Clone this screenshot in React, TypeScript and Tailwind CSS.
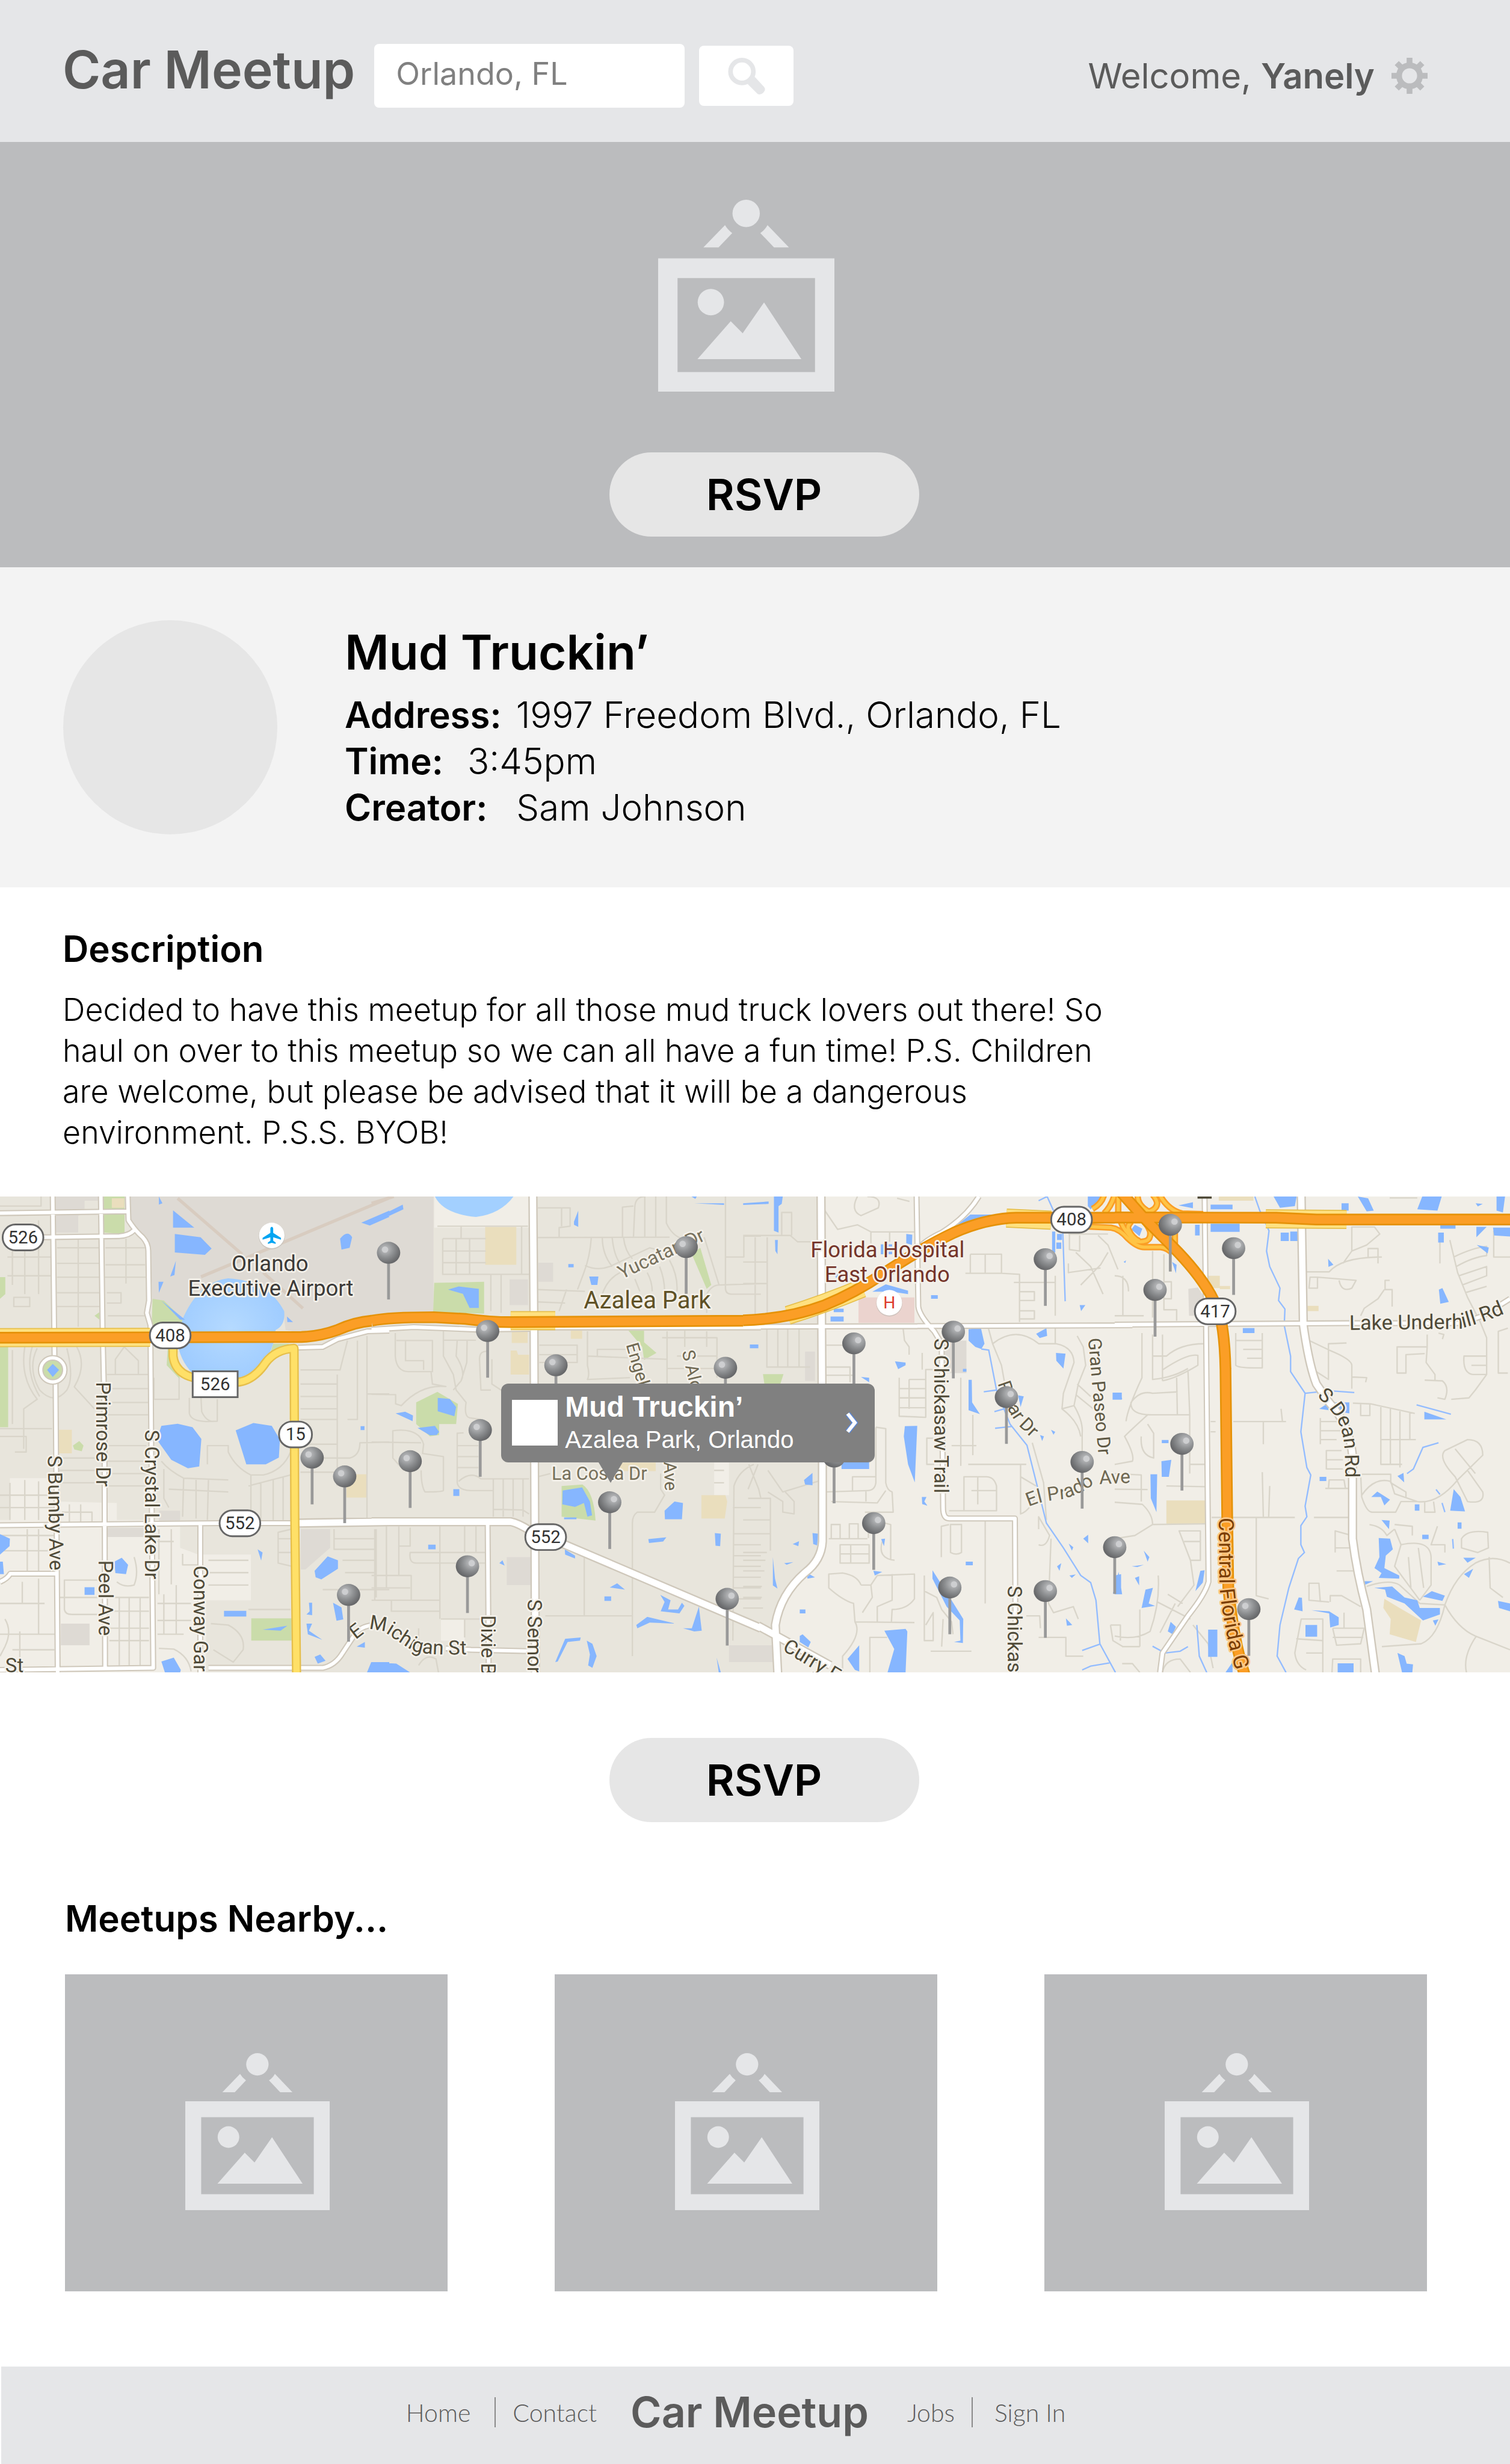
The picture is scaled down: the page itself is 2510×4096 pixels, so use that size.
import type { ReactNode } from "react";

/* ---------- map geometry ---------- */

// The map is drawn on a 4267 x 1345 canvas, sheet by sheet. Each sheet has its own grid.
const sheets = {
  a: { x: 0, y: -12, sx: 0.7015, sy: 0.8737 },
  b: { x: 1050, y: -12, sx: 0.7015, sy: 0.8737 },
  c: { x: 2100, y: -12, sx: 0.7015, sy: 0.8737 },
  d: { x: 3150, y: -12, sx: 0.7124, sy: 0.8737 },
  e: { x: 3100, y: -12, sx: 0.3333, sy: 0.3333 },
};
type Sheet = keyof typeof sheets;

const px = (s: Sheet, x: number) => Math.round(sheets[s].x + x * sheets[s].sx);
const py = (s: Sheet, y: number) => Math.round(sheets[s].y + y * sheets[s].sy);
const on = (s: Sheet, d: string) =>
  d.replace(/(-?\d+) (-?\d+)/g, (_, x, y) => `${px(s, Number(x))} ${py(s, Number(y))}`);
const shapes = (s: Sheet, list: string) =>
  list
    .split(";")
    .map((p) => on(s, "M" + p.trim() + "Z"))
    .join("");
// "x1 y1 x2 y2" corner pairs
const boxes = (s: Sheet, list: string) =>
  list
    .split(";")
    .map((b) => {
      const [x1, y1, x2, y2] = b.trim().split(" ").map(Number);
      return on(s, `M${x1} ${y1} L${x2} ${y1} L${x2} ${y2} L${x1} ${y2}Z`);
    })
    .join("");

const pale =
  shapes("a", "40 925 L230 925 L230 1000 L470 1005 L470 1060 L725 1060 L725 1150 L800 1172 L1010 1172 L1010 1320 L830 1320 L830 1553 L0 1553 L0 1060 L40 1060") +
  boxes("b", "252 14 635 115; 280 1380 375 1450; 1380 875 1440 980") +
  shapes("c", "330 0 L3200 0 L3200 1560 L140 1560 L130 1400 Q150 1300 250 1230 L320 1140");

const stone =
  shapes("a", "520 14 L1568 14 L1568 395 L1430 415 L1220 455 L1150 445 L1140 380 L1000 280 L800 320 L740 410 L615 345 L605 180 L520 90; 225 14 L395 14 L395 28 L340 28 L340 70 L315 75 L315 130 L225 130; 1212 1090 L1330 1090 L1330 1150 L1230 1220 L1212 1220") +
  boxes("a", "430 1085 600 1115; 245 1395 360 1465; 640 1030 725 1062") +
  boxes("b", "0 14 250 395; 556 282 630 365; 545 1180 640 1270; 672 228 732 290; 1440 1465 1568 1520") +
  boxes("c", "810 480 900 585; 0 1465 125 1520; 250 515 290 610") +
  shapes("d", "292 312 L330 308 L360 345 L345 400 L295 400");

const park =
  shapes("a", "417 14 L502 14 L502 135 L417 130; 0 275 L22 275 L22 330 L0 345; 615 345 L660 350 L740 412 L740 450 L610 450; 675 500 L700 500 L725 605 L672 560; 1100 490 L1165 490 L1080 540; 293 820 L320 805 L336 820 L330 838 L300 832; 380 400 L400 388 L400 412") +
  boxes("a", "0 500 33 760; 1012 1378 1175 1450") +
  shapes("b", "252 293 L453 290 L453 393 L248 388; 180 680 L265 645 L348 685 L340 750 L272 750 L272 785 L235 790 L180 750; 765 950 L850 945 Q895 970 903 1062 L765 1050; 1035 447 L1098 447 L1098 485 L1147 520 L1098 543 L1090 500; 1290 200 L1325 180 L1368 300 L1350 312") +
  shapes("c", "80 588 L162 588 L150 620 L85 620");

const sand =
  boxes("a", "237 768 290 845; 1395 912 1478 988; 450 20 500 50") +
  boxes("b", "458 112 583 235; 565 450 628 488; 803 448 848 474; 1000 875 1145 902") +
  shapes("b", "560 512 L585 512 L590 525 L635 525 L635 590 L560 590; 1328 980 L1425 980 L1433 1000 L1423 1055 L1328 1055") +
  boxes("d", "372 270 417 310; 417 303 458 314; 205 997 360 1073; 757 367 808 384; 412 14 550 28") +
  shapes("d", "1070 1315 L1130 1345 L1215 1385 L1195 1455 L1090 1430 L1095 1380 L1065 1345");

const water =
  shapes("a", "697 58 L783 115 L697 115; 704 135 L808 145 L852 182 L826 203 L704 195; 708 222 L703 268 L686 272; 638 290 L658 290 L640 325; 640 14 L655 35 L640 40; 650 350 L745 412 L725 412; 1455 98 L1568 60 L1568 80 L1490 108; 1370 150 Q1400 120 1418 145 L1408 180 L1375 185; 632 800 L650 755 L715 748 L775 760 L811 798 L802 887 L757 893 L690 865; 949 770 L1020 746 L1095 755 L1128 800 L1124 858 L1070 880 L992 880; 460 1195 L490 1182 L516 1205 L508 1235 L465 1232; 1038 1155 L1058 1165 L1052 1192; 0 1106 L40 1120 L38 1145 L0 1172; 0 1195 L12 1195 L15 1235 L0 1235; 1267 1225 L1320 1178 L1362 1190 L1362 1218 L1295 1252 L1272 1245; 1342 1328 L1375 1342 L1383 1382 L1355 1386; 1235 1395 L1258 1395 L1245 1418 L1298 1448 L1240 1430; 1245 1328 L1258 1328 L1258 1368 L1235 1365 L1248 1355; 1267 1503 L1290 1495 L1312 1515 L1280 1525; 650 1518 L700 1505 L728 1545 L725 1553 L665 1553; 1495 1520 L1568 1520 L1568 1553 L1478 1553; 1058 1415 L1158 1402 L1130 1418; 1437 1470 L1470 1455 L1470 1473; 1156 402 L1180 420 L1158 420") +
  boxes("a", "340 1277 380 1302; 903 1354 992 1372; 1453 757 1468 769") +
  shapes("b", "0 90 L125 40 L128 55 L0 103; 308 315 L350 305 L432 312 L432 374 L395 374 L368 328; 267 665 L315 668 L340 695 L333 725 L267 708; 97 715 L135 710 L167 722 L165 740; 186 762 L255 755 L272 775 L262 785 L235 786; 770 965 L848 955 L880 1000 L888 1045 L870 1050 L855 1005 L820 1018 L768 1010; 877 272 L914 272 L910 300 L885 300; 815 95 L832 60 L832 112 L815 105; 1180 1030 L1220 1000 L1254 1005 L1250 1058 L1182 1058; 1115 1122 L1188 1116 L1175 1130 L1118 1134; 1383 1102 L1407 1105 L1404 1145 L1385 1143; 1066 1400 L1110 1373 L1225 1395 L1120 1392 L1070 1410; 1255 1410 L1290 1410 L1318 1340 L1330 1418 L1300 1420; 740 1520 L780 1445 L842 1440 L840 1450 L790 1455 L750 1518; 867 1450 L890 1460 L906 1500 L890 1538 L872 1530 L880 1495; 1163 1302 L1205 1320 L1195 1350 L1235 1350 L1250 1328 L1260 1338 L1240 1362 L1165 1355 L1180 1325; 0 1520 L100 1525 L155 1553 L0 1553; 960 1278 L990 1265 L1020 1285; 515 1200 L528 1190 L536 1207; 778 1155 L820 1175 L820 1185 L780 1172; 1300 36 L1420 36 L1420 41; 1288 14 L1310 14 L1305 22; 1390 1505 L1407 1553 L1398 1553") +
  boxes("b", "793 232 814 243; 228 1140 258 1155; 329 960 354 982; 1524 492 1558 505; 938 1307 965 1322; 775 1052 825 1057") +
  shapes("c", "124 14 L160 14 L155 38 L142 45 L142 130 L124 125; 128 155 L140 155 L138 200 L130 190; 862 105 L915 72 L1020 72 L1010 85 L930 95; 657 135 L682 137 L680 170 L657 165; 520 322 L575 298 L665 318 L665 330 L600 322; 908 443 L958 440 L972 490 L960 507 L935 500 L908 480; 647 790 L652 757 L701 755 L692 938 L665 880; 908 607 L921 607 L922 680 L953 718 L908 705; 569 1418 L655 1412 L662 1420 L655 1553 L582 1553 L608 1478; 762 1222 L840 1320 L887 1380 L885 1458 L850 1455 L875 1450 L872 1385 L820 1340 L762 1250; 245 930 L280 908 L280 948 L250 945; 280 1102 L302 1105 L298 1142 L282 1138; 421 1510 L468 1465 L468 1550 L450 1545; 228 1435 L240 1430 L272 1455 L262 1472 L228 1455; 612 547 L655 550 L655 560 L625 572; 1260 520 L1298 522 L1290 570 L1262 545; 1180 458 L1222 440 L1224 465 L1195 472; 1108 657 L1130 660 L1118 695; 1490 1298 L1512 1228 L1527 1300; 120 1180 L128 1250 L138 1282 L120 1272; 255 1230 L290 1245 L260 1250; 474 598 L508 600 L508 615; 525 1225 L560 1228 L530 1240; 1370 1120 L1390 1108 L1390 1135; 1265 1210 L1282 1200 L1275 1225; 1300 1378 L1326 1400 L1305 1402; 1388 14 L1450 14 L1400 55 L1388 45; 720 985 L738 985 L730 1000 L742 1014 L722 1008; 165 1200 L203 1196 L175 1205; 200 1138 L225 1128 L222 1144; 556 1122 L572 1120 L568 1145; 1196 785 L1212 790 L1205 805; 1240 768 L1258 775 L1250 784; 1312 1136 L1330 1148 L1325 1160; 1315 1240 L1340 1236 L1325 1248; 1356 365 L1378 365 L1362 385; 0 36 L103 30 L103 38 L0 41; 1533 225 L1542 220 L1540 229") +
  boxes("c", "352 402 405 418; 365 377 405 388; 396 870 508 895; 1488 648 1525 671; 757 333 784 345; 897 1195 925 1206; 28 492 62 505; 1245 127 1257 195; 1265 135 1285 155; 1262 163 1282 183; 228 1349 251 1362; 885 571 900 580; 555 168 600 200; 372 262 408 276") +
  shapes("d", "630 14 L722 14 L715 45 L655 50; 252 42 L310 32 L310 52; 965 14 L1005 20 L1028 60 L1000 62; 1200 55 L1220 14 L1297 14 L1280 60; 1500 115 L1568 115 L1568 143 L1505 140; 1435 145 L1435 112 L1475 112; 1436 170 L1484 178 L1480 198; 1515 14 L1548 14 L1540 65 L1515 60; 1286 315 L1300 310 L1325 355 L1292 360; 846 215 L867 235 L848 242; 142 912 L168 912 L165 1035 L143 990; 185 870 L224 865 L215 920 L187 920; 812 700 L850 680 L930 680 L930 715 L880 708; 1228 710 L1315 735 L1228 735; 1018 985 L1042 968 L1092 995 L1070 1013 L1055 985; 1331 1030 L1345 960 L1372 985 L1390 1032; 1047 1118 L1092 1120 L1104 1155 L1075 1175 L1070 1215 L1128 1240 L1128 1250 L1047 1248 L1058 1232 L1030 1215 L1050 1180; 1030 1280 L1100 1275 L1150 1310 L1200 1320 L1210 1345 L1290 1345 L1290 1365 L1222 1385 L1150 1330 L1080 1308 L1072 1285; 1222 1308 L1258 1290 L1310 1305 L1300 1322; 1520 1322 L1568 1330 L1568 1355 L1525 1345; 711 1350 L730 1310 L743 1312 L745 1355; 780 1352 L850 1355 L888 1375 L888 1400 L855 1408 L850 1362; 1122 1490 L1150 1500 L1158 1525 L1183 1527 L1180 1553 L1140 1553; 106 1345 L122 1285 L152 1280 L135 1330 L160 1338; 320 1290 L340 1225 L356 1222 L350 1262; 0 1300 L0 1240 L25 1235 L25 1300; 1386 1235 L1422 1218 L1405 1248; 1382 1182 L1432 1182 L1400 1198; 1058 1060 L1090 1062 L1088 1090; 210 1420 L222 1390 L243 1405 L230 1430; 1122 918 L1145 908 L1148 938; 115 1160 L138 1180 L130 1195; 0 650 L25 648 L30 670 L0 670; 228 225 L245 235 L243 262; 66 120 L80 105 L110 118 L98 142; 80 1248 L97 1242 L97 1272; 68 1210 L115 1205 L90 1212; 440 1553 L468 1520 L468 1553; 987 1258 L1025 1258 L990 1270; 1262 1385 L1285 1382 L1272 1402; 1432 35 L1460 38 L1440 46; 1280 1195 L1315 1203 L1285 1208") +
  boxes("d", "380 40 468 55; 380 102 496 128; 318 105 337 140; 658 130 690 158; 696 127 726 158; 900 35 928 60; 1292 107 1352 118; 1283 130 1305 162; 508 440 555 455; 813 920 840 934; 757 1400 803 1438; 885 1523 948 1553; 371 1415 407 1503; 1190 1010 1208 1030; 1360 1068 1376 1088; 1220 1108 1245 1122; 187 801 214 811");

const creeks =
  on("c", "M1190 28 L1225 14 L1250 60 M1287 120 L1297 352 M960 507 L990 510 L1020 640 L1075 750 L1143 818 L1185 950 L1222 1070 L1290 1150 L1360 1240 L1400 1262 L1421 1320 L1437 1460 L1500 1553 M970 646 L1020 640 M1012 710 L1060 698 M1015 763 L1080 758 M1365 1482 L1437 1462 M1365 1545 L1400 1532 L1475 1522") +
  on("d", "M556 14 L575 60 L612 125 L602 190 L615 240 L655 310 L650 350 L675 378 L673 430 L697 530 L697 580 L755 650 L738 775 L762 890 L778 915 L755 1015 L762 1050 L738 1078 L738 1140 L752 1165 L728 1185 L690 1280 L655 1400 L645 1500 L680 1553 M755 650 L850 642 L950 648 M1160 910 L1185 895 L1222 825 L1285 810 M1197 688 L1333 718 M150 1468 L200 1490 L260 1485 L290 1470 M325 1400 L335 1500 L365 1553 M1275 962 L1290 978 M1298 1005 L1310 1035 M1340 1122 L1343 1152");

const streets =
  on("a", "M0 45 L165 45 L165 14 M50 155 L50 300 M100 160 L100 330 M155 90 L155 330 M30 210 L205 210 M30 270 L205 270 M55 340 L120 340 L120 370 L55 370 Z M230 180 L400 180 M230 230 L400 230 M230 275 L590 275 M230 325 L400 325 M230 370 L400 370 M315 150 L315 435 M425 180 L585 180 M425 235 L585 235 M508 150 L508 295 M430 325 L488 325 L488 358 L430 358 M435 400 L590 400 M50 510 L50 750 M100 500 Q80 600 150 670 L95 700 L95 830 M310 500 Q350 560 300 630 L380 700 M270 505 Q300 600 270 640 Q220 690 160 640 Q110 570 150 505 M130 500 Q100 580 160 660 M465 590 L465 540 L500 500 L558 545 L558 590 M430 590 L600 590 M430 635 L600 635 M430 680 L600 680 M430 720 L600 720 M620 600 L620 670 L722 670 L722 600 M762 665 L762 715 Q770 740 830 742 L875 740 L875 670 M810 665 L812 710 Q830 740 860 742 M835 880 L835 820 L920 820 L920 840 Q950 890 1010 915 L1060 915 Q1140 900 1170 840 M650 870 Q680 900 740 925 L920 930 M660 895 L660 990 L680 1020 M740 925 L735 1050 M790 925 L790 1055 M840 930 L835 1060 M680 960 L920 970 M1010 915 L1010 1060 M1050 940 L1050 1060 M1100 930 L1100 1060 M1140 920 L1140 1060 M1000 950 L1170 915 M1210 620 L1358 620 M1210 660 L1358 660 M1210 700 L1358 700 M1210 735 L1358 735 M1358 590 L1358 950 M1210 575 L1370 575 L1400 480 M1440 480 L1440 735 L1400 735 M1478 465 L1478 1055 M1210 860 L1410 860 Q1450 850 1450 810 L1568 808 M1480 652 L1568 652 M1210 815 L1358 815 M1210 905 L1358 905 M1345 1090 L1345 1155 L1510 1155 M1510 1090 L1510 1320 M1345 1120 L1510 1120 M1380 1190 L1510 1190 M1390 1230 L1510 1230 M1300 1285 L1568 1285 M40 940 L40 1060 M100 930 L100 1060 M155 935 L155 1060 M0 980 L230 980 M0 1020 L230 1020 M280 1010 L280 1070 M325 1010 L325 1070 M250 1035 L370 1035 L370 1070 M0 765 L210 765 M0 790 L105 790 L105 840 L60 840 M230 860 L400 860 M230 900 L400 900 M230 940 L400 940 M430 820 L590 820 M430 870 L590 870 M430 910 L590 910 M430 950 L590 950 M0 1110 L230 1110 M110 1090 L110 1225 M155 1090 L155 1225 M0 1160 L230 1160 M395 1255 L260 1255 L260 1350 Q262 1365 290 1365 L400 1365 M240 1310 L395 1310 M445 1310 L600 1310 M480 1310 L480 1530 M520 1310 L520 1530 M565 1310 L565 1530 M440 1355 L600 1355 M440 1450 L600 1450 M440 1410 L600 1410 M0 1330 L180 1330 M90 1260 L90 1330 M155 1250 L155 1430 M20 1380 Q50 1420 20 1470 L0 1500 M50 1480 L220 1480 M80 1420 L80 1540 M0 1430 L230 1430 M540 1180 Q560 1230 540 1270 Q500 1280 470 1260 M640 1090 L640 1300 M690 1090 L690 1268 M630 1130 L700 1130 M735 1170 L735 1205 L800 1205 M840 1190 L1000 1190 M840 1230 L1000 1230 M840 1270 L1000 1270 M635 1330 L770 1330 M635 1385 L770 1385 M635 1430 L740 1430 M660 1300 L660 1430 M710 1270 L710 1430 M1000 1350 L1170 1350 M1175 1090 L1120 1100 L1120 1200 L1175 1210 M1120 1120 L1175 1120 M1120 1165 L1175 1165 M850 1395 L920 1400 Q990 1430 980 1480 L940 1520 L860 1480 M640 1475 L700 1478 Q760 1500 770 1550") +
  on("b", "M265 110 L630 110 M287 150 L460 150 M287 190 L460 190 M287 228 L460 228 M287 150 L287 265 L635 265 M340 150 L340 265 M395 150 L395 265 M480 265 L480 385 M522 265 L522 390 M360 110 L360 150 M605 110 L605 265 M670 50 L800 50 L800 110 L755 115 L755 145 M765 50 L765 110 M670 147 L1200 145 M885 147 Q880 210 855 260 L830 315 M860 237 Q910 255 960 240 L1120 180 L1230 200 M930 147 Q930 200 970 240 M970 147 Q975 200 1000 230 M1015 147 Q1020 190 1050 215 M1055 147 L1060 45 Q1065 14 1100 14 L1100 145 M1145 14 L1145 145 M1187 14 L1187 100 Q1210 140 1250 150 M1010 145 L1010 48 L1055 45 M1425 14 L1425 210 L1500 210 L1500 142 L1568 142 M1425 210 L1425 310 Q1425 330 1450 330 L1568 330 M1340 145 L1400 300 L1568 295 M1350 390 L1350 330 Q1370 300 1400 300 M785 315 L755 385 M670 315 L860 320 M670 355 L780 358 M1060 280 L1080 320 M1110 260 Q1130 290 1130 320 M1160 240 Q1180 280 1180 320 M1200 220 Q1235 270 1230 320 M1000 260 Q950 280 930 330 M95 455 L95 530 Q100 580 150 580 L245 580 L245 480 L100 480 M137 480 L137 545 L210 545 L210 575 M290 450 L290 530 L330 590 L340 640 L380 680 Q370 730 400 730 L440 735 M290 478 L420 478 M345 478 L340 530 Q380 580 360 610 L330 640 M385 478 L383 550 L360 610 M470 515 Q435 510 435 540 L440 640 L480 640 M485 540 L485 620 L560 660 M240 580 L245 620 L300 628 Q200 620 120 690 L97 685 L97 655 L0 653 M0 808 L200 810 M130 900 L85 860 L85 772 Q190 760 210 815 L205 845 L290 855 L290 965 Q285 970 215 970 Q200 950 200 900 M370 778 L345 780 L345 940 Q350 965 400 965 L490 965 M345 820 L430 820 M345 855 L430 855 M345 890 L430 890 M350 935 Q400 900 440 927 L635 927 M490 927 L490 1050 M530 927 L530 1050 M570 927 L570 1050 M610 927 L610 1050 M490 1025 L610 1028 L635 1040 M870 450 L870 560 Q880 590 870 605 L1040 600 M870 530 L1190 540 M910 530 L910 508 L1035 508 M675 495 L828 495 L828 550 L675 550 M675 525 L828 525 M1190 450 L1190 620 M1170 470 L1392 470 L1392 600 M1230 530 L1392 530 M1190 570 L1392 570 M1262 447 L1262 500 M1350 450 L1350 500 M670 920 L720 910 M1165 910 L1165 960 L1180 980 L1140 1035 L1070 1035 Q1050 1045 1050 1070 L1050 1500 M857 1180 L857 1370 M700 1370 L1050 1370 M1540 880 Q1480 900 1460 950 L1455 1450 M1455 1020 L1568 1020 M1455 1105 L1568 1105 M1455 1140 L1568 1140 M1455 1175 L1568 1175 M1455 1210 L1568 1210 M1455 1245 L1568 1245 M1455 1280 L1568 1280 M1455 1315 L1568 1315 M1520 880 L1560 960 L1568 990 M1380 900 L1420 900 M1380 940 L1420 940 M460 1165 L155 1165 Q150 1200 180 1200 L460 1200 M275 1080 L275 1380 M110 1080 L110 1240 L160 1240 L160 1320 M60 1080 L60 1280 M18 1090 L18 1310 M110 1145 L155 1145 L155 1085 M80 1320 L80 1355 L275 1355 M0 1240 L110 1240 M0 1280 L155 1280 M0 1320 L275 1320 M375 1080 L375 1165 M420 1080 L420 1165 M190 1410 L190 1470 M280 1380 L460 1380 M375 1380 L375 1440 M190 1530 Q220 1490 260 1510 L270 1553") +
  on("c", "M0 140 L190 140 L220 160 L300 160 M155 140 L155 65 L195 65 L195 140 M0 225 L100 225 M48 145 L48 395 M97 145 L97 395 M0 295 L100 295 M330 60 L380 120 L460 105 L515 128 L515 165 M460 14 Q430 60 475 75 L545 50 Q560 14 500 14 M515 128 L690 128 M590 128 L590 160 M620 20 L670 30 M915 200 L1040 200 L1040 262 L895 262 M975 200 L975 262 M915 200 L915 262 M1040 262 L1113 265 L1113 420 M1090 292 L1255 292 M1258 270 L1258 400 M1113 322 L1173 322 L1173 350 L1113 350 M1113 383 L1173 383 L1173 410 L1113 410 M1310 135 L1470 135 M1315 135 L1315 185 L1355 190 L1355 140 M1310 230 L1310 260 L1440 245 M1340 195 L1400 240 L1450 330 M1430 140 L1470 170 L1510 250 M1530 270 L1530 400 M1360 300 L1440 235 L1470 195 M95 440 L95 565 L270 565 M140 440 L140 565 M180 440 L180 565 M225 440 L225 565 M335 495 L460 495 M335 565 L430 565 L430 615 M335 592 L450 592 M645 440 L650 480 L668 500 L668 525 M628 600 L628 725 L735 728 L735 573 L770 573 M668 605 L735 605 M668 605 L668 700 M628 635 L735 635 M628 665 L735 665 M628 697 L735 697 M722 520 L722 573 M765 795 L740 795 L740 880 L770 880 M840 820 L940 820 M877 600 L877 885 M925 720 L925 850 M535 760 L575 765 L575 940 Q580 965 600 970 L605 1035 L490 1035 M535 760 L535 940 Q530 965 500 965 L330 970 M440 965 L440 920 L535 920 M355 1000 L540 1005 L575 965 M495 965 L495 1000 M345 1120 L500 1120 M355 1118 L355 1075 L390 1075 L390 1118 M427 1118 L427 1072 L463 1072 L463 1118 M505 1035 L505 1118 M390 1140 L508 1140 L508 1200 L390 1200 Z M434 1140 L434 1200 M390 1170 L508 1170 M570 1070 L595 1075 L595 1190 M560 1130 Q540 1185 610 1190 M475 1270 Q460 1240 400 1232 L345 1235 L345 1280 Q400 1320 445 1330 L450 1390 L690 1392 M540 1390 L540 1340 L600 1320 L600 1235 M515 1270 L540 1240 L690 1235 L690 1315 Q660 1350 600 1350 L598 1390 M475 1270 L515 1270 L520 1310 L480 1360 M450 1390 Q480 1430 400 1500 L400 1553 M580 1440 L510 1440 L510 1553 M890 920 L890 1030 L1020 1030 L1020 950 Q1010 920 980 920 Z M830 1030 L890 1030 M920 965 L1020 965 M945 920 L945 1010 M907 880 L1140 880 M1117 880 L1117 1040 Q1160 1030 1190 960 M1117 920 L1180 950 M988 440 L1005 490 L1040 560 L1060 650 M1005 490 Q1100 430 1190 490 L1260 490 Q1330 500 1333 550 L1290 650 L1285 700 L1333 690 L1350 620 L1380 560 L1370 500 L1345 465 M1258 440 L1258 490 M1333 690 Q1370 740 1365 780 L1365 870 M1285 700 Q1350 740 1360 790 M1345 620 L1400 660 M1340 655 L1410 700 M1165 810 L1210 940 L1222 1060 M1190 1090 L1190 1050 L1235 1110 Q1220 1150 1190 1140 M835 1075 L880 1075 L880 1165 Q860 1175 835 1165 Z M798 1180 L798 1080 L830 1075 M730 1240 L730 1450 L765 1450 L765 1360 L735 1400 M730 1290 L780 1310 L800 1350 L840 1390 L845 1430 M805 1380 L800 1470 M755 1485 L920 1485 M975 1050 L975 1330 M1240 1120 L1230 1330 L1250 1360 L1330 1340 L1350 1380 M1140 1370 L1195 1370 L1197 1410 M1190 1440 L1300 1440 L1300 1500 L1370 1500 M1480 1400 L1520 1400 L1520 1450 M1480 1400 L1490 1450 L1530 1470 M0 1060 L110 1060 M0 1105 L110 1105 M0 1165 L95 1165 M0 1190 L90 1190 M0 1225 L85 1225 M0 1275 L75 1275 M0 1310 L75 1310 M0 1345 L80 1345 M20 990 L110 990 L110 1160 M100 970 L160 1000 L160 1035 L205 1040 L205 1000 L170 970 M100 900 L160 970 L320 930 M60 880 L20 960") +
  on("d", "M150 190 L150 405 M0 400 L115 400 M0 270 Q55 270 55 320 M195 200 L195 380 L245 380 L245 415 M195 290 L225 290 L225 345 L195 345 M480 455 L480 560 Q490 570 585 568 L585 455 M480 480 L585 480 M510 508 L585 508 M525 537 L585 537 M108 455 L108 600 Q50 700 45 740 M150 460 L150 605 Q230 600 290 570 M190 460 L190 610 M150 530 L205 530 Q260 490 355 490 M190 575 Q290 520 330 528 L330 560 Q250 600 190 610 M245 600 L248 720 M290 575 L297 720 L297 910 M250 645 L150 650 Q100 640 65 680 Q60 720 145 720 L297 720 M130 720 Q50 780 40 790 Q80 850 70 870 L0 880 M105 790 Q100 850 155 860 L155 780 L130 750 M0 910 L105 915 L105 1000 M0 960 L130 962 M0 1003 L110 1010 Q150 1040 150 1075 L360 1073 M150 1075 L80 1110 L0 1120 M205 950 L360 952 M300 880 L360 880 M300 1190 L340 1190 L340 1095 L255 1095 L300 1190 L315 1270 L250 1340 M275 1130 L340 1130 M380 742 L400 742 M470 742 L680 742 M590 742 L590 815 M660 700 L665 742 M380 775 L400 775 M385 1052 L715 1052 M790 1052 L930 1052 M585 905 L590 1052 M615 950 L610 1052 M562 1052 L562 1305 L610 1315 M760 475 L850 510 Q940 540 940 560 L940 635 M920 488 L848 490 L848 605 L800 580 M940 598 L1000 600 L995 615 M755 258 L850 258 Q900 210 1060 210 M905 230 L940 190 L940 112 L1030 112 L1052 135 L1000 170 L940 190 M1005 210 L1005 182 L1045 182 L1045 230 M775 275 L805 275 L805 310 L770 310 Z M805 275 L957 285 L940 310 Q900 325 890 285 M1090 285 L1072 285 L1072 315 L1100 315 L1100 370 M1070 315 L1045 345 L990 375 L975 400 M1090 18 L1200 18 M1330 155 L1360 260 L1400 340 L1450 420 L1475 470 L1475 590 L1430 640 L1405 665 L1335 670 M1345 210 Q1420 180 1475 175 L1475 205 Q1420 210 1355 240 M1365 270 L1475 240 L1475 270 L1378 300 M1390 325 L1475 305 M1503 125 L1503 210 L1568 210 M1290 145 L1290 230 M1240 460 L1240 500 L1120 500 L1120 585 L1155 585 L1155 525 L1230 522 M1240 500 L1235 550 L1270 590 L1270 610 M1230 608 L1300 610 Q1330 630 1310 670 L1280 665 M1475 530 L1385 530 Q1380 585 1420 590 L1475 590 M1285 455 L1305 460 L1300 475 M1560 440 L1522 450 L1522 585 L1560 585 M1415 560 L1475 560 M945 682 L1015 685 L1190 715 M975 685 L975 722 L1012 722 L1012 685 M1055 690 L1055 880 L1140 880 M1093 700 L1093 880 M1132 705 L1132 890 M1170 712 L1170 800 M1055 800 L1195 800 M815 730 L815 815 M815 742 L900 742 M815 772 L900 772 M815 800 L880 800 M900 835 L840 835 L840 895 L905 895 M840 865 L905 865 M848 958 L850 930 L910 930 L915 958 M835 958 L930 958 M1155 985 L1155 970 L1095 940 L1095 912 L975 912 L980 985 Q1000 1035 1020 1035 L1115 1035 L1135 1000 L1200 1000 M980 980 Q1030 920 1095 935 L1110 975 L1200 1000 Q1280 1010 1360 930 L1460 850 Q1460 800 1400 800 L1310 835 Q1280 860 1350 920 L1400 1000 Q1470 1010 1460 970 L1400 900 M1350 830 L1430 910 M1230 1000 L1230 1035 L1270 1035 L1265 1000 M930 1108 L875 1095 L875 1165 M875 1150 L930 1150 M1000 1275 Q1090 1250 1130 1270 L1210 1330 L1310 1335 Q1280 1440 1215 1460 L1060 1470 M1310 1335 Q1350 1240 1430 1200 Q1500 1170 1568 1200 M1310 1335 Q1360 1410 1430 1435 L1568 1480 M1435 1435 Q1380 1500 1395 1553 M1485 1180 L1490 1280 L1540 1310 M1110 1090 L1135 1140 L1110 1210 L1210 1320 M1135 1140 Q1250 1120 1255 1180 L1255 1270 L1210 1320 M1165 1180 L1175 1280 M1205 1150 L1225 1280 M1110 1075 L1180 1080 L1180 1110 M1010 1075 Q1060 1080 1080 1110 L1110 1090 M1280 1080 L1255 1140 L1310 1140 L1310 1165 M1375 1120 Q1400 1090 1480 1100 L1482 1150 L1440 1165 L1375 1150 Z M880 1225 L950 1225 M815 1325 L810 1265 L770 1265 L770 1320 L850 1325 M855 1325 L855 1305 L900 1305 L975 1340 M825 1553 L825 1380 L740 1380 L715 1490 Q720 1530 760 1545 M720 1445 L825 1450 M760 1490 L825 1490 M865 1410 L990 1410 L975 1460 L880 1465 L865 1410 M865 1440 L985 1440 M910 1360 L910 1410 M975 1553 L975 1510 L865 1510 L862 1553 M172 1240 Q180 1330 140 1420 Q80 1450 0 1435 M170 1325 L300 1380 M100 1470 L30 1470 M210 1300 L270 1330 M240 1330 L180 1425 M100 1350 L100 1470 M190 1553 Q200 1510 260 1510 L300 1553 M30 1525 L70 1525 L100 1553 M310 1400 L370 1460 L390 1540");

const avenues =
  on("a", "M213 14 L220 535 M224 615 L232 1553 M406 14 L413 445 L420 700 L424 1540 M515 14 L517 90 Q545 125 575 145 Q598 165 598 190 L600 350 L592 390 L606 430 L610 900 L615 1300 L617 1538 L0 1545 M0 68 L515 62 M175 145 L480 142 Q520 140 540 122 M0 1077 L885 1070 L1180 1070 M0 1260 Q30 1250 42 1234 L232 1234 M807 1075 L807 1553 M840 1538 L1300 1538 Q1350 1530 1380 1490 L1430 1430 Q1450 1405 1500 1400 M1200 503 L1300 500 L1360 475 L1480 450 L1568 447") +
  on("b", "M0 444 L170 436 L420 444 L640 442 M670 437 L1568 437 M468 1075 L472 1553 M300 1475 L400 1480 L650 1485") +
  on("c", "M0 435 L1568 430 M698 14 L705 370 Q710 400 770 450 L800 490 L805 1020 Q805 1055 830 1055 L1095 1055 L1098 1553 M950 14 Q900 80 800 130 Q720 160 700 190") +
  on("d", "M0 428 L920 424 L1380 424 L1460 400 L1568 345 M357 14 L362 430 L372 1260 Q360 1300 290 1370 L190 1490 L180 1553");

const boulevards =
  on("a", "M1205 1070 L1568 1066") +
  on("b", "M650 14 L655 450 L660 1553 M0 1066 L560 1066 Q590 1070 640 1095 L780 1140 L1568 1410") +
  on("c", "M60 1402 L350 1530 M313 14 L320 870 L320 1130 Q315 1190 250 1230 Q150 1300 130 1400 L140 1560") +
  on("d", "M740 14 L748 430 Q770 560 800 620 L850 680 Q930 750 943 850 L943 1120 Q960 1230 1000 1350 L1035 1560");

const yellowRoads = on("a", "M697 480 L697 530 Q705 585 780 600 M955 615 Q1020 610 1070 550 Q1110 508 1185 505 L1188 1040 L1195 1560");

const ramps = on(
  "e",
  "M60 20 Q40 100 -40 140 M150 20 Q120 120 60 180 M180 20 L180 170 M345 20 Q340 110 440 165 Q510 140 510 90 Q500 50 470 20 M530 20 Q600 150 720 180 L900 185 M-200 285 L120 300 Q190 310 260 390 Q340 465 400 465 L540 465 Q600 470 640 520 M200 250 Q230 330 320 410 Q370 430 420 410 Q460 390 450 330 Q430 280 400 250 M290 250 Q250 290 270 320 Q300 390 360 415 M660 250 L660 460",
);

const highways =
  on("a", "M-20 470 L1215 468 Q1290 466 1360 445 Q1430 420 1497 416") +
  on("b", "M0 416 Q70 404 250 404 L380 410 Q480 420 560 420 L1497 416") +
  on("c", "M0 414 Q180 410 330 365 Q450 325 560 265 Q720 180 850 130 Q980 85 1100 82 L1497 82") +
  on("d", "M0 81 L640 82 L800 88 L1600 88") +
  on("e", "M205 0 L400 220 L640 460 Q850 670 960 860 L1010 960 Q1080 1100 1090 1500") +
  on("d", "M440 570 L447 1060 L450 1280 Q470 1450 520 1570");

const highwayEdge =
  on("a", "M0 470 L605 469") + on("b", "M560 416 L740 416") + on("c", "M180 398 Q330 360 480 310 M1060 84 L1240 90") + on("d", "M600 86 L920 88");

type Pin = [Sheet, number, number, boolean];
// sheet, head x, head y, whether the light falls from the left
const pins: Pin[] = [
  ["b", 69, 196, true],
  ["a", 1258, 858, true],
  ["a", 1389, 919, true],
  ["a", 1404, 1303, true],
  ["b", 467, 449, true],
  ["b", 742, 560, true],
  ["b", 1267, 177, true],
  ["b", 1425, 568, true],
  ["b", 437, 769, true],
  ["b", 156, 870, true],
  ["b", 960, 1003, false],
  ["b", 386, 1210, false],
  ["b", 1433, 1315, false],
  ["c", 446, 489, false],
  ["c", 847, 451, false],
  ["c", 1217, 216, false],
  ["c", 1060, 663, false],
  ["c", 1365, 872, false],
  ["c", 366, 855, false],
  ["c", 526, 1070, false],
  ["c", 832, 1279, false],
  ["c", 1217, 1290, false],
  ["c", 1497, 1148, false],
  ["d", 221, 105, false],
  ["d", 472, 181, false],
  ["d", 160, 316, false],
  ["d", 267, 814, false],
  ["d", 532, 1348, true],
];

function MapPin({ x, y, left }: { x: number; y: number; left: boolean }) {
  const hx = left ? x - 10 : x + 12;
  return (
    <g>
      <rect x={x - 4} y={y + 20} width="8" height="112" fill="#999999" />
      <ellipse cx={x} cy={y} rx="33" ry="31" fill={left ? "url(#pin-left)" : "url(#pin-right)"} />
      <circle cx={hx} cy={y - 9} r="9" fill="#cdced0" />
    </g>
  );
}

function Shield({ s, x, y, n, w = 115, square = false }: { s: Sheet; x: number; y: number; n: string; w?: number; square?: boolean }) {
  const cx = px(s, x);
  const cy = py(s, y);
  return (
    <g>
      <rect x={cx - w / 2} y={cy - 36} width={w} height="73" rx={square ? 0 : 36} fill="#ffffff" stroke="#666666" strokeWidth="5" />
      <text x={cx} y={cy + 17} textAnchor="middle" fontSize="50" fill="#333333">
        {n}
      </text>
    </g>
  );
}

function Label({ s, x, y, size = 56, turn = 0, color = "#4f4a38", middle = false, children }: { s: Sheet; x: number; y: number; size?: number; turn?: number; color?: string; middle?: boolean; children: ReactNode }) {
  return (
    <text
      transform={`translate(${px(s, x)} ${py(s, y)}) rotate(${turn})`}
      fontSize={size}
      fill={color}
      stroke="#f4f1ea"
      strokeWidth="9"
      strokeLinejoin="round"
      paintOrder="stroke"
      textAnchor={middle ? "middle" : "start"}
    >
      {children}
    </text>
  );
}

function PathLabel({ id, d, size = 56, color = "#4f4a38", halo = "#f4f1ea", children }: { id: string; d: string; size?: number; color?: string; halo?: string; children: ReactNode }) {
  return (
    <>
      <path id={id} d={d} fill="none" />
      <text fontSize={size} fill={color} stroke={halo} strokeWidth="9" strokeLinejoin="round" paintOrder="stroke">
        <textPath href={`#${id}`}>{children}</textPath>
      </text>
    </>
  );
}

function StreetMap() {
  return (
    <svg viewBox="0 0 4267 1345" className="block w-full font-['Roboto',sans-serif]" role="img" aria-label="Map of east Orlando with nearby meetups">
      <defs>
        <radialGradient id="pin-left" cx="0.36" cy="0.34" r="0.66">
          <stop offset="0" stopColor="#c3c4c6" />
          <stop offset="0.55" stopColor="#8e9092" />
          <stop offset="1" stopColor="#68696b" />
        </radialGradient>
        <radialGradient id="pin-right" cx="0.66" cy="0.34" r="0.66">
          <stop offset="0" stopColor="#c3c4c6" />
          <stop offset="0.55" stopColor="#8e9092" />
          <stop offset="1" stopColor="#68696b" />
        </radialGradient>
        <radialGradient id="lake" cx="0.5" cy="0.5" r="0.6">
          <stop offset="0" stopColor="#b5daff" />
          <stop offset="1" stopColor="#9ccaff" />
        </radialGradient>
      </defs>
      <rect width="4267" height="1345" fill="#e8e5dc" />
      <path d={pale} fill="#f1eee7" />
      <path d={stone} fill="#dedad4" />
      <path d={boxes("c", "465 340 690 422")} fill="#ebd3ce" />
      <path d={park} fill="#cadcaa" />
      <path d={sand} fill="#eadebd" />
      <path d={on("a", "M715 20 L975 200 M1060 260 L1220 375 M810 273 L1568 18") + on("b", "M0 35 L90 14")} fill="none" stroke="#d8ccc0" strokeWidth="9" />
      <path
        d={on("a", "M735 410 Q800 290 920 278 Q1080 285 1145 385 Q1150 430 1110 445 L1100 490 Q1060 590 960 605 L780 590 Q720 540 715 480Z")}
        fill="url(#lake)"
      />
      <path d={on("b", "M255 14 L572 14 Q520 70 420 80 Q290 70 255 14Z")} fill="#a3d0ff" />
      <path d={streets} fill="none" stroke="#d9d5ca" strokeWidth="4" strokeLinejoin="round" />
      <path d={water} fill="#86b6ff" />
      <path d={creeks} fill="none" stroke="#93bcff" strokeWidth="4" />

      <g fill="none" strokeLinejoin="round">
        <path d={avenues} stroke="#cfc8bb" strokeWidth="17" />
        <path d={boulevards} stroke="#cfc8bb" strokeWidth="26" />
        <path d={avenues} stroke="#ffffff" strokeWidth="10" />
        <path d={boulevards} stroke="#ffffff" strokeWidth="18" />
        <path d={highwayEdge} stroke="#e6bf4b" strokeWidth="54" />
        <path d={highwayEdge} stroke="#ffe180" strokeWidth="48" />
        <path d={yellowRoads} stroke="#e6bf4b" strokeWidth="26" />
        <path d={yellowRoads} stroke="#ffe067" strokeWidth="18" />
        <path d={ramps} stroke="#fa9e25" strokeWidth="18" />
        <path d={ramps} stroke="#ffc445" strokeWidth="9" />
        <path d={highways} stroke="#e59208" strokeWidth="33" />
        <path d={highways} stroke="#fb9e26" strokeWidth="24" />
      </g>
      <circle cx={px("a", 213)} cy={py("a", 575)} r="34" fill="#cadcaa" stroke="#cfc8bb" strokeWidth="16" />
      <circle cx={px("a", 213)} cy={py("a", 575)} r="34" fill="none" stroke="#ffffff" strokeWidth="9" />
      <path d={shapes("a", "190 575 L213 555 L238 575 L213 597")} fill="#86b6ff" />
      <path d={boxes("d", "328 14 385 21")} fill="#4f4a38" />

      <Shield s="a" x={92} y={145} n="526" />
      <Shield s="a" x={686} y={462} n="408" />
      <Shield s="a" x={867} y={620} n="526" w={127} square />
      <Shield s="a" x={1191} y={783} n="15" w={93} />
      <Shield s="a" x={967} y={1070} n="552" />
      <Shield s="b" x={701} y={1115} n="552" />
      <Shield s="c" x={1323} y={88} n="408" />
      <Shield s="d" x={398} y={384} n="417" />

      <g transform={`translate(${px("a", 1095)} ${py("a", 140)})`}>
        <circle cy="2" r="37" fill="#c9c5be" />
        <circle r="36" fill="#ffffff" />
        <path d="M0 -24 Q4 -24 4 -18 V-7 L26 7 V12 L4 5 V15 L11 20 V24 L0 21 L-11 24 V20 L-4 15 V5 L-26 12 V7 L-4 -7 V-18 Q-4 -24 0 -24Z" fill="#03a5f2" />
      </g>
      <g transform={`translate(${px("c", 589)} ${py("c", 357)})`}>
        <circle cy="2" r="37" fill="#d0c4be" />
        <circle r="36" fill="#ffffff" />
        <text y="17" textAnchor="middle" fontSize="48" fill="#dd3b2d">
          H
        </text>
      </g>

      <Label s="a" x={1088} y={255} size={62} color="#3c3a38" middle>Orlando</Label>
      <Label s="a" x={1090} y={335} size={62} color="#3c3a38" middle>Executive Airport</Label>
      <Label s="b" x={1111} y={377} size={68} color="#5f5126" middle>Azalea Park</Label>
      <Label s="c" x={581} y={211} size={62} color="#75352a" middle>Florida Hospital</Label>
      <Label s="c" x={580} y={291} size={62} color="#75352a" middle>East Orlando</Label>
      <Label s="a" x={388} y={613} turn={90}>Primrose Dr</Label>
      <Label s="a" x={192} y={851} turn={89}>S Bumby Ave</Label>
      <Label s="a" x={583} y={768} turn={90}>S Crystal Lake Dr</Label>
      <Label s="a" x={396} y={1190} turn={90}>Peel Ave</Label>
      <Label s="a" x={780} y={1207} turn={90}>Conway Gar</Label>
      <Label s="a" x={22} y={1553}>St</Label>
      <Label s="b" x={442} y={1368} turn={90}>Dixie B</Label>
      <Label s="b" x={628} y={1316} turn={90}>S Semor</Label>
      <Label s="b" x={1008} y={282} size={54} turn={-25} color="#77705c">Yucatan Dr</Label>
      <Label s="b" x={1025} y={493} size={50} turn={74} color="#6f6852">Engel</Label>
      <Label s="b" x={1250} y={515} size={50} turn={77} color="#6f6852">S Alo</Label>
      <Label s="b" x={1177} y={872} size={50} turn={88} color="#6f6852">Ave</Label>
      <Label s="b" x={725} y={930} size={52} color="#77705c">La Costa Dr</Label>
      <Label s="c" x={770} y={473} turn={90}>S Chickasaw Trail</Label>
      <Label s="c" x={1065} y={1273} turn={90}>S Chickas</Label>
      <Label s="c" x={1390} y={473} size={52} turn={85} color="#5f5945">Gran Paseo Dr</Label>
      <PathLabel id="michigan" d={on("b", "M-64 1448 L-20 1420 Q20 1405 70 1432 Q110 1455 160 1480 Q200 1500 420 1494")}>E Michigan St</PathLabel>
      <PathLabel id="pinar" size={52} color="#5f5945" d={on("c", "M1025 618 Q1060 710 1110 755 L1200 825")}>Pinar Dr</PathLabel>
      <PathLabel id="prado" size={54} color="#6f6852" d={on("c", "M1150 1018 Q1200 998 1290 992 Q1370 972 1410 945 L1600 938")}>El Prado Ave</PathLabel>
      <PathLabel id="curry" d={on("c", "M155 1480 L380 1590 L600 1700")}>Curry Ford</PathLabel>
      <PathLabel id="underhill" size={58} d={on("d", "M930 445 L1360 442 Q1440 430 1568 385")}>Lake Underhill Rd</PathLabel>
      <PathLabel id="dean" d={on("d", "M802 660 Q890 720 905 790 Q918 840 914 1000")}>S Dean Rd</PathLabel>
      <PathLabel id="central" size={59} color="#7a3d00" halo="#fcc886" d={on("d", "M412 1053 L416 1270 Q430 1420 500 1600 L540 1700")}>Central Florida G</PathLabel>

      {pins.map(([s, x, y, left]) => (
        <MapPin key={`${s}${x}-${y}`} x={px(s, x)} y={py(s, y)} left={left} />
      ))}
    </svg>
  );
}

/* ---------- icons ---------- */

function PictureIcon({ className }: { className: string }) {
  return (
    <svg viewBox="370 92 709 772" className={className} fill="#e5e6e8" aria-hidden="true">
      <circle cx="724" cy="147" r="55" />
      <path d="M552 284 L639 194 Q650 213 668 226 L613 284Z M896 284 L810 194 Q800 213 781 226 L836 284Z" />
      <path fillRule="evenodd" d="M370 328 H1079 V864 H370Z M448 407 V785 H1001 V407Z" />
      <circle cx="582" cy="504" r="53" />
      <path d="M528 733 L662 581 L710 629 L796 505 L946 733Z" />
    </svg>
  );
}

function SearchIcon() {
  return (
    <svg viewBox="2050 158 118 118" className="size-[70px]" aria-hidden="true">
      <circle cx="2096" cy="205" r="32" fill="none" stroke="#e5e6e8" strokeWidth="13" />
      <path d="M2132 220 L2158 248 Q2164 256 2156 264 Q2148 272 2140 268 L2112 240 Z" fill="#e5e6e8" />
    </svg>
  );
}

function GearIcon() {
  return (
    <svg viewBox="-50 -50 100 100" className="size-[60px]" aria-hidden="true">
      <circle r="29" fill="none" stroke="#bbbcbe" strokeWidth="16" />
      {[0, 45, 90, 135, 180, 225, 270, 315].map((a) => (
        <rect key={a} x="-8" y="-50" width="16" height="18" fill="#bbbcbe" transform={`rotate(${a})`} />
      ))}
    </svg>
  );
}

/* ---------- page ---------- */

function RsvpButton({ className = "" }: { className?: string }) {
  return (
    <button type="button" className={`h-[140px] w-[515px] rounded-full bg-[#e6e6e6] text-[72px] font-semibold leading-none text-black ${className}`}>
      RSVP
    </button>
  );
}

const details = [
  { label: "Address:", value: "1997 Freedom Blvd., Orlando, FL", gap: "gap-6" },
  { label: "Time:", value: "3:45pm", gap: "gap-10" },
  { label: "Creator:", value: "Sam Johnson", gap: "gap-12" },
];

export default function App() {
  return (
    <div className="min-h-screen bg-white font-['Inter',sans-serif] text-black">
      <header className="flex h-[236px] items-center bg-[#e5e6e8] pl-[104px] pr-[137px] pt-4 text-[#5b5b5b]">
        <a href="#" className="mb-5 mr-8 whitespace-nowrap text-[86px] font-semibold leading-none">
          Car Meetup
        </a>
        <form className="flex items-center gap-6" onSubmit={(e) => e.preventDefault()}>
          <input
            type="text"
            aria-label="Location"
            defaultValue="Orlando, FL"
            className="h-[106px] w-[516px] rounded-lg bg-white pb-2 pl-9 text-[52px] text-[#808080] outline-none"
          />
          <button type="submit" aria-label="Search" className="flex h-[100px] w-[157px] items-center justify-center rounded-lg bg-white">
            <SearchIcon />
          </button>
        </form>
        <p className="ml-auto mr-7 whitespace-nowrap text-[58px] leading-none">
          Welcome, <span className="font-semibold">Yanely</span>
        </p>
        <button type="button" aria-label="Settings">
          <GearIcon />
        </button>
      </header>

      <section className="flex flex-col items-center bg-[#bbbcbe] pb-[51px] pt-24">
        <PictureIcon className="mr-[30px] w-[293px]" />
        <RsvpButton className="ml-[30px] mt-[101px]" />
      </section>

      <section className="flex gap-[112px] bg-[#f3f3f3] px-[105px] py-[88px]">
        <div className="size-[356px] shrink-0 rounded-full bg-[#e6e6e6]" />
        <div className="pt-[11px]">
          <h1 className="text-[80px] font-semibold leading-[84px]">Mud Truckin’</h1>
          <dl className="mt-6 leading-[77px]">
            {details.map((d) => (
              <div key={d.label} className={`flex text-[60px] ${d.gap}`}>
                <dt className="font-semibold">{d.label}</dt>
                <dd className="font-[350]">{d.value}</dd>
              </div>
            ))}
          </dl>
        </div>
      </section>

      <section className="px-[104px] pb-[72px] pt-16">
        <h2 className="text-[60px] font-semibold leading-[76px]">Description</h2>
        <p className="mt-[30px] max-w-[1780px] text-[52px] font-[350] leading-[68px]">
          Decided to have this meetup for all those mud truck lovers out there! So haul on over to this meetup so we can all have a fun time! P.S. Children
          are welcome, but please be advised that it will be a dangerous environment. P.S.S. BYOB!
        </p>
      </section>

      <section className="relative">
        <StreetMap />
        <a
          href="#"
          className="absolute left-[33.2%] top-[39.3%] flex h-[131px] w-[621px] items-center rounded-xl bg-[#808080] pl-[18px] pr-7 font-['Liberation_Sans',sans-serif] text-white"
        >
          <span className="size-[76px] bg-white" />
          <span className="ml-3 flex flex-col whitespace-nowrap">
            <span className="text-[48px] font-bold leading-[56px]">Mud Truckin’</span>
            <span className="text-[40px] leading-[52px]">Azalea Park, Orlando</span>
          </span>
          <svg viewBox="0 0 22 38" className="ml-auto h-[38px] w-[22px]" fill="none" aria-hidden="true">
            <path d="M5 4 L17 19 L5 34" stroke="#5b87d6" strokeWidth="9" />
            <path d="M5 4 L17 19 L5 34" stroke="#ffffff" strokeWidth="6" />
          </svg>
          <svg viewBox="0 0 40 34" className="absolute left-[162px] top-full h-[34px] w-10" aria-hidden="true">
            <path d="M0 0 H40 L20 34Z" fill="#808080" />
          </svg>
        </a>
      </section>

      <div className="mt-[109px] flex justify-center">
        <RsvpButton className="ml-[30px]" />
      </div>

      <section className="pl-[108px] pr-[138px] pt-[122px]">
        <h2 className="text-[60px] font-semibold leading-[76px]">Meetups Nearby...</h2>
        <div className="mt-[55px] grid grid-cols-3 gap-[178px]">
          {["first", "second", "third"].map((n) => (
            <a key={n} href="#" aria-label={`Open the ${n} nearby meetup`} className="flex h-[527px] items-center justify-center bg-[#bbbcbe] pb-1 pl-1">
              <PictureIcon className="w-60" />
            </a>
          ))}
        </div>
      </section>

      <footer className="ml-[2px] mt-[125px] flex h-[162px] items-center justify-center bg-[#e5e6e8] pb-[10px] pr-[66px] text-[#5b5b5b]">
        <nav aria-label="Site" className="flex items-center font-['Lato',sans-serif] text-[41px] font-light leading-none">
          <a href="#">Home</a>
          <span className="ml-10 mr-7 h-[50px] w-[2px] bg-[#8a8a8a]" />
          <a href="#">Contact</a>
        </nav>
        <a href="#" className="ml-14 mr-16 text-[70px] font-semibold leading-none">
          Car Meetup
        </a>
        <nav aria-label="Account" className="flex items-center font-['Lato',sans-serif] text-[41px] font-light leading-none">
          <a href="#">Jobs</a>
          <span className="ml-7 mr-9 h-[50px] w-[2px] bg-[#8a8a8a]" />
          <a href="#">Sign In</a>
        </nav>
      </footer>
    </div>
  );
}
